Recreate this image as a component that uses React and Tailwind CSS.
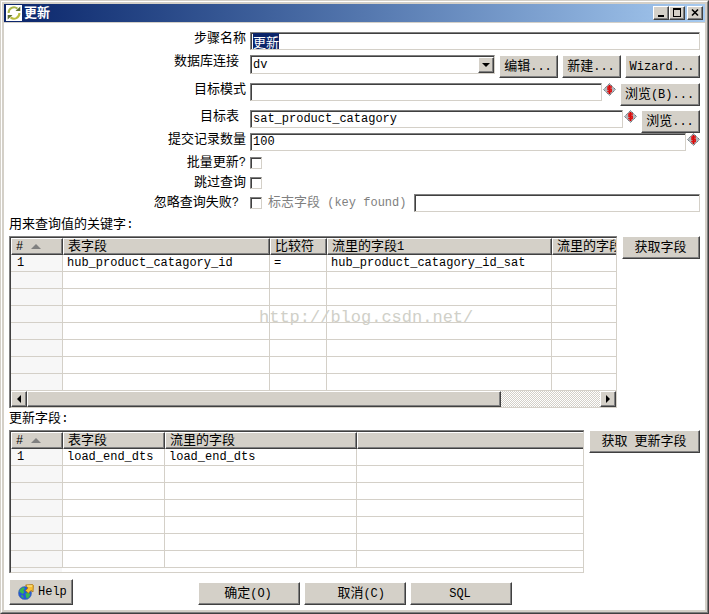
import { useState } from 'react'
import clsx from 'clsx'

const sunken =
  'border border-t-[#808080] border-l-[#808080] border-r-[#d4d0c8] border-b-[#d4d0c8] shadow-[inset_1px_1px_0_#404040]'
const raised =
  'bg-[#d4d0c8] border border-t-white border-l-white border-r-[#404040] border-b-[#404040] shadow-[inset_-1px_-1px_0_#808080]'

function Mixed({ children }) {
  return children.split(/([\x20-\x7e]+)/).map((part, i) =>
    i % 2 ? <span key={i} className="text-xs leading-none">{part}</span> : part
  )
}

function Button({ children, className }) {
  return (
    <button type="button" className={clsx('h-[23px] shrink-0 whitespace-pre pr-px text-center', raised, className)}>
      <Mixed>{children}</Mixed>
    </button>
  )
}

function TextInput({ className, ...props }) {
  return (
    <input
      type="text"
      className={clsx('h-[18px] min-w-0 flex-1 bg-white px-0.5 outline-none selection:bg-[#0a246a] selection:text-white', sunken, className)}
      {...props}
    />
  )
}

function Row({ id, label, indent, className = 'items-start', children }) {
  return (
    <div className={clsx('flex gap-1', className)}>
      <label htmlFor={id} className={clsx('w-[237px] shrink-0 text-right', indent && 'pr-[7px]')}>
        <Mixed>{label}</Mixed>
      </label>
      {children}
    </div>
  )
}

function CheckBox(props) {
  return <input type="checkbox" className={clsx('size-3 shrink-0 appearance-none bg-white', sunken)} {...props} />
}

function VariableIcon() {
  return (
    <svg viewBox="0 0 13 13" className="size-[13px] shrink-0" aria-hidden="true">
      <path d="M6.5 0.5 12.5 6.5 6.5 12.5 0.5 6.5Z" fill="#b4b8bc" stroke="#66727a" strokeDasharray="1.4 0.7" />
      <path d="M6.5 2v9" stroke="#d00000" strokeWidth="1.8" />
      <path d="M9 4H5v2.2h3.2v2.4H4.2" fill="none" stroke="#e01010" strokeWidth="1.5" />
    </svg>
  )
}

function UpdateIcon() {
  return (
    <svg viewBox="0 0 16 16" className="size-4" aria-hidden="true">
      <path d="M0 0h16v16H0z" fill="#fff" />
      <path d="M2.6 8A5.4 5.4 0 0 1 11.4 3.6" fill="none" stroke="#a9b64a" strokeWidth="2" />
      <path d="M13.4 8A5.4 5.4 0 0 1 4.6 12.4" fill="none" stroke="#b8bd3c" strokeWidth="2" />
      <path d="M9.5 6h4.8V1.6Z" fill="#5f7030" />
      <path d="M6.5 10H1.7v4.4Z" fill="#5f7030" />
    </svg>
  )
}

function HelpIcon() {
  return (
    <svg viewBox="0 0 16 16" className="size-4 shrink-0" aria-hidden="true">
      <circle cx="7" cy="9" r="6.6" fill="#2458d8" stroke="#5474a4" strokeWidth="0.6" />
      <path d="M2 5.5 5 3.2l2 1-1.6 2.4 1 1.6-2 1.8-1.6-1.6L1.4 8ZM7.5 9.6l3-.8 1.8 1.8-1.5 2.9-2.2 1-.8-2.4ZM3 11l2 .4.6 2.6-1.8-.8Z" fill="#38b84c" />
      <path d="M7.6 1 14.6.6l.8.8-.4 6.6-2-1.6-2.6 2.8-2.8-2.6 2.4-2.6Z" fill="#f6bf36" stroke="#a87412" strokeWidth="0.8" />
      <path d="M9 2h5" stroke="#fff0a0" />
    </svg>
  )
}

function WindowButton({ label, className, children }) {
  return (
    <button type="button" aria-label={label} className={clsx('flex h-[14px] w-4 items-center justify-center', raised, className)}>
      <svg viewBox="0 0 12 10" className="h-[10px] w-3 shrink-0" fill="none" stroke="#000" shapeRendering="crispEdges" aria-hidden="true">
        {children}
      </svg>
    </button>
  )
}

function Grid({ label, columns, rows, emptyRows }) {
  const all = [...rows, ...Array.from({ length: emptyRows }, () => [])]
  return (
    <table aria-label={label} className="w-full table-fixed border-separate border-spacing-0">
      <colgroup>
        {columns.map((col, i) => (
          <col key={i} style={{ width: col.width }} />
        ))}
      </colgroup>
      <thead>
        <tr className="h-[17px]">
          {columns.map((col, i) => (
            <th
              key={i}
              scope="col"
              className={clsx(
                'overflow-hidden border-t border-l border-t-white border-l-white border-b border-b-[#404040] bg-[#d4d0c8] p-0 pl-1 text-left font-normal whitespace-nowrap',
                i < columns.length - 1
                  ? 'border-r border-r-[#404040] shadow-[inset_-1px_-1px_0_#808080]'
                  : 'shadow-[inset_0_-1px_0_#808080]'
              )}
            >
              <Mixed>{col.title}</Mixed>
              {i === 0 && <span className="ml-2 inline-block border-x-[5px] border-b-[5px] border-x-transparent border-b-[#808080] align-middle" />}
            </th>
          ))}
        </tr>
      </thead>
      <tbody>
        {all.map((row, r) => (
          <tr key={r} className="h-[17px]">
            {columns.map((col, i) => (
              <td
                key={i}
                className={clsx(
                  'overflow-hidden border-b border-[#d4d0c8] p-0 text-xs leading-[14px] whitespace-nowrap',
                  i === 0 ? 'bg-[#f7f7f7] pl-[6px]' : 'pl-1',
                  i < columns.length - 1 && 'border-r'
                )}
              >
                {row[i]}
              </td>
            ))}
          </tr>
        ))}
      </tbody>
    </table>
  )
}

const keyColumns = [
  { title: '#', width: 52 },
  { title: '表字段', width: 207 },
  { title: '比较符', width: 57 },
  { title: '流里的字段1', width: 225 },
  { title: '流里的字段' },
]
const keyRows = [['1', 'hub_product_catagory_id', '=', 'hub_product_catagory_id_sat']]

const updateColumns = [
  { title: '#', width: 52 },
  { title: '表字段', width: 102 },
  { title: '流里的字段', width: 192 },
  { title: '' },
]
const updateRows = [['1', 'load_end_dts', 'load_end_dts']]

export default function App() {
  const [stepName, setStepName] = useState('更新')

  return (
    <div className="border border-t-[#d4d0c8] border-l-[#d4d0c8] border-r-[#404040] border-b-[#404040] font-['Liberation_Mono','Noto_Sans_CJK_SC',monospace] text-[13px] leading-[14px] text-black">
      <div className="border border-t-white border-l-white border-r-[#808080] border-b-[#808080]">
        <div className="border-2 border-[#d4d0c8] bg-white">
          <header className="flex h-[19px] items-center border-b border-[#d4d0c8] bg-linear-to-r from-[#0a246a] to-[#a6caf0] pr-0.5 pl-0.5">
            <UpdateIcon />
            <h1 className="ml-0.5 flex-1 pt-0.5 font-bold text-white">更新</h1>
            <WindowButton label="最小化">
              <path d="M3 8h6" strokeWidth="2" />
            </WindowButton>
            <WindowButton label="最大化">
              <path d="M2 1h8" strokeWidth="2" />
              <path d="M2.5 1v7.5h7V1" />
            </WindowButton>
            <WindowButton label="关闭" className="ml-0.5">
              <path d="M3 1.5l6 6M9 1.5l-6 6" strokeWidth="1.6" shapeRendering="auto" />
            </WindowButton>
          </header>

          <main className="px-[5px] pt-[9px] pb-[5px]">
            <Row id="step" label="步骤名称" className="mb-[5px] items-start">
              <TextInput id="step" autoFocus onFocus={(e) => e.target.select()} value={stepName} onChange={(e) => setStepName(e.target.value)} />
            </Row>
            <Row id="db" label="数据库连接" indent className="mb-[5px] items-start">
              <div className="relative flex min-w-0 flex-1">
                <select id="db" className={clsx('h-[19px] w-full appearance-none bg-white px-0.5 text-xs outline-none', sunken)}>
                  <option>dv</option>
                </select>
                <span className={clsx('pointer-events-none absolute top-0.5 right-px flex h-4 w-4 items-center justify-center', raised)}>
                  <span className="border-x-4 border-t-4 border-x-transparent border-t-black" />
                </span>
              </div>
              <Button className="w-[59px]">编辑...</Button>
              <Button className="w-[59px]">新建...</Button>
              <Button className="w-[75px]">Wizard...</Button>
            </Row>
            <Row id="schema" label="目标模式" className="mb-1 items-start">
              <div className="flex min-w-0 flex-1 gap-px">
                <TextInput id="schema" className="text-xs" />
                <VariableIcon />
              </div>
              <Button className="w-20">浏览(B)...</Button>
            </Row>
            <Row id="table" label="目标表" indent>
              <div className="flex min-w-0 flex-1 gap-px">
                <TextInput id="table" className="text-xs" defaultValue="sat_product_catagory" />
                <VariableIcon />
              </div>
              <Button className="w-[59px]">浏览...</Button>
            </Row>
            <Row id="commit" label="提交记录数量" className="h-5 items-start">
              <div className="flex min-w-0 flex-1 gap-px">
                <TextInput id="commit" className="text-xs" defaultValue="100" />
                <VariableIcon />
              </div>
            </Row>
            <Row id="batch" label="批量更新?" className="h-5 items-center">
              <CheckBox id="batch" />
            </Row>
            <Row id="skip" label="跳过查询" className="h-5 items-center">
              <CheckBox id="skip" />
            </Row>
            <Row id="ignore" label="忽略查询失败?" indent className="h-5 items-center">
              <CheckBox id="ignore" />
              <label htmlFor="flag" className="w-[144px] shrink-0 pl-0.5 whitespace-pre text-[#808080]">
                <Mixed>标志字段 (key found)</Mixed>
              </label>
              <TextInput id="flag" className="text-xs" />
            </Row>

            <h2 className="mt-px h-[22px] leading-[22px]">用来查询值的关键字:</h2>
            <div className="relative flex items-start gap-[5px]">
              <div className="min-w-0 flex-1 border-t border-l border-[#808080]">
                <div className="border-t border-l border-r border-b border-t-[#404040] border-l-[#404040] border-r-[#d4d0c8] border-b-[#d4d0c8]">
                  <Grid label="用来查询值的关键字" columns={keyColumns} rows={keyRows} emptyRows={7} />
                  <div className="flex h-4 bg-[repeating-conic-gradient(#d4d0c8_0_25%,#fff_0_50%)] bg-size-[2px_2px]">
                    <button type="button" aria-label="向左滚动" className={clsx('flex w-4 items-center justify-center', raised)}>
                      <span className="border-y-4 border-r-4 border-y-transparent border-r-black" />
                    </button>
                    <div className={clsx('w-[474px]', raised)} />
                    <button type="button" aria-label="向右滚动" className={clsx('ml-auto flex w-4 items-center justify-center', raised)}>
                      <span className="border-y-4 border-l-4 border-y-transparent border-l-black" />
                    </button>
                  </div>
                </div>
              </div>
              <Button className="w-[78px]">获取字段</Button>
              <span className="pointer-events-none absolute top-[70px] left-[250px] text-[17px] leading-6 text-[#d0d0c8]">
                http://blog.csdn.net/
              </span>
            </div>

            <h2 className="h-[22px] leading-[22px]">更新字段:</h2>
            <div className="flex items-start gap-[5px]">
              <div className="min-w-0 flex-1 border-t border-l border-[#808080]">
                <div className="border-t border-l border-r border-b border-t-[#404040] border-l-[#404040] border-r-[#d4d0c8] border-b-[#d4d0c8] bg-linear-to-r from-[#f7f7f7] from-[51px] to-white to-[51px] pb-1">
                  <Grid label="更新字段" columns={updateColumns} rows={updateRows} emptyRows={6} />
                </div>
              </div>
              <Button className="w-[111px]">获取 更新字段</Button>
            </div>

            <footer className="mt-[6px] grid grid-cols-[1fr_auto_1fr] items-end">
              <button type="button" className={clsx('flex h-[26px] w-16 items-center gap-1 pl-2 text-xs', raised)}>
                <HelpIcon />
                Help
              </button>
              <div className="flex gap-1">
                <Button className="w-[102px]">确定(O)</Button>
                <Button className="w-[102px]">{'  取消(C)'}</Button>
                <Button className="w-[102px]">SQL</Button>
              </div>
            </footer>
          </main>
        </div>
      </div>
    </div>
  )
}
